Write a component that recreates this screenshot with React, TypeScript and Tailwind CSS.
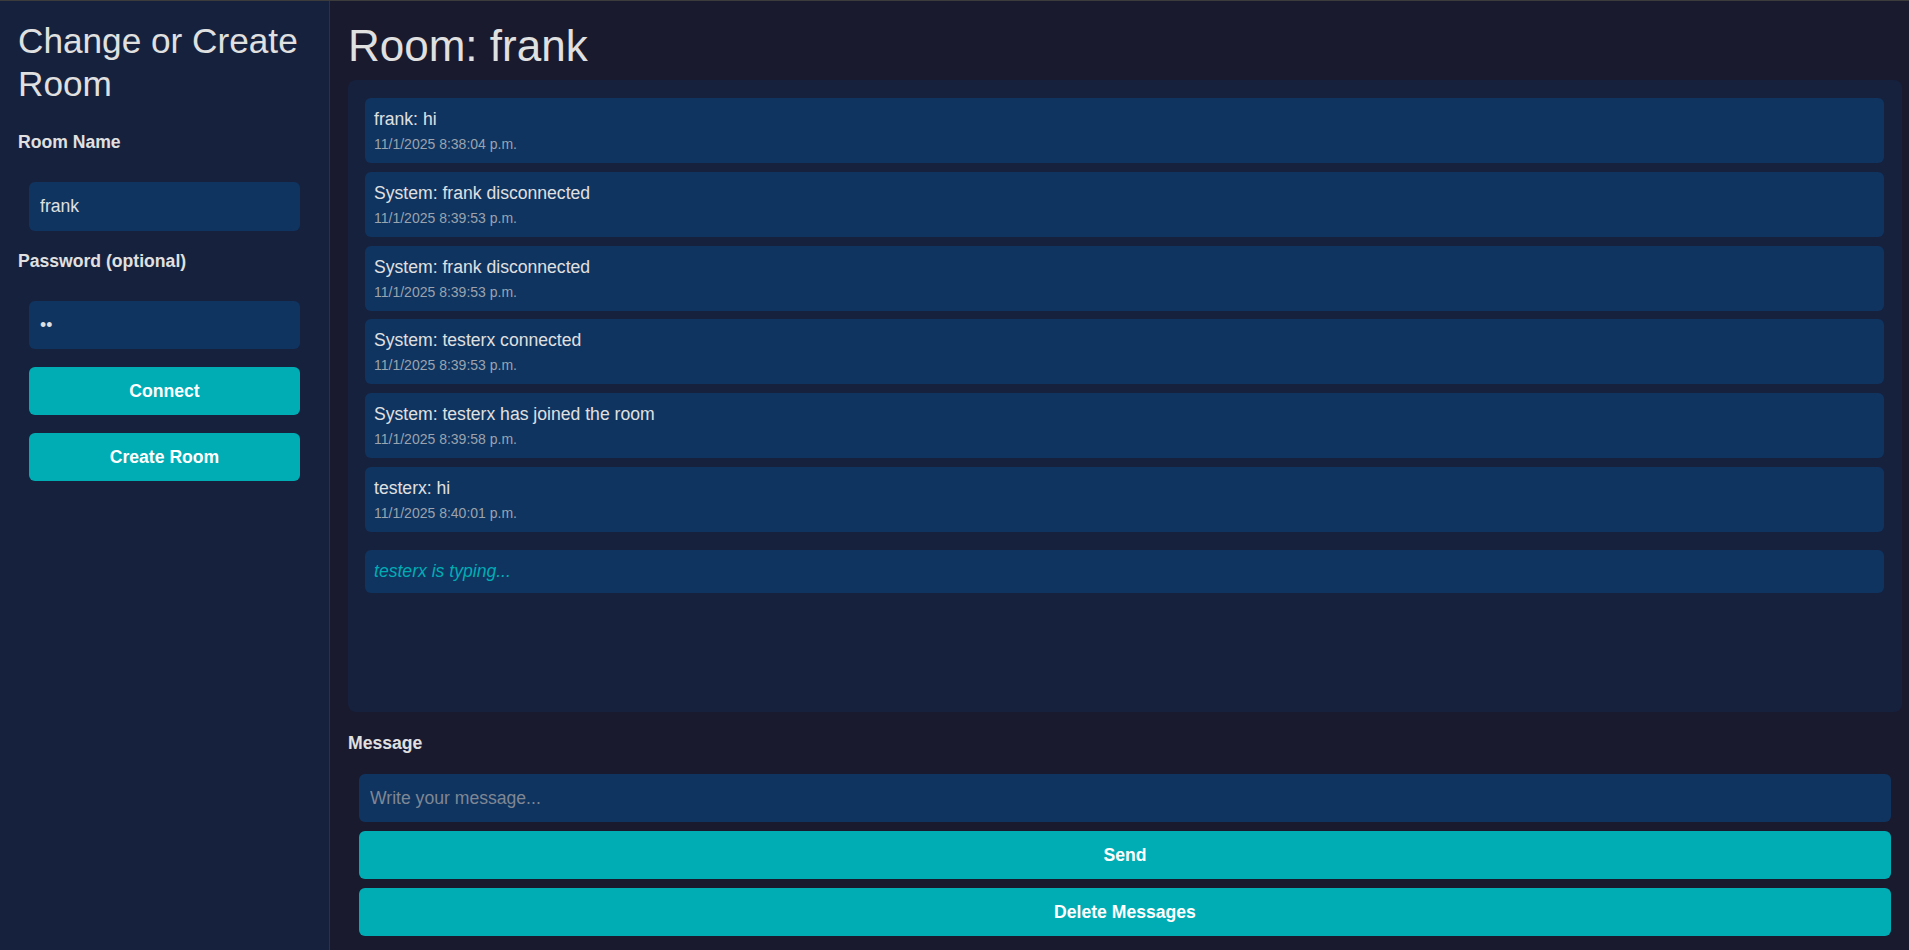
import { useState } from "react";

type Msg = { id: number; text: string; time: string };

const messages: Msg[] = [
  { id: 1, text: "frank: hi", time: "11/1/2025 8:38:04 p.m." },
  { id: 2, text: "System: frank disconnected", time: "11/1/2025 8:39:53 p.m." },
  { id: 3, text: "System: frank disconnected", time: "11/1/2025 8:39:53 p.m." },
  { id: 4, text: "System: testerx connected", time: "11/1/2025 8:39:53 p.m." },
  { id: 5, text: "System: testerx has joined the room", time: "11/1/2025 8:39:58 p.m." },
  { id: 6, text: "testerx: hi", time: "11/1/2025 8:40:01 p.m." },
];

const inputCls =
  "block w-[calc(100%-22px)] mx-[11px] rounded-[6px] bg-[#0f3460] px-[11px] text-[17.6px] text-[#e0e0e0] placeholder:text-[#7f8794] outline-none border-0";
const btnCls =
  "block w-[calc(100%-22px)] mx-[11px] h-[48px] rounded-[6px] bg-[#00adb5] text-[17.6px] font-bold text-white";

const App: React.FC = () => {
  const [room, setRoom] = useState("frank");
  const [draft, setDraft] = useState("");

  return (
    <div className="flex h-[950px] w-full border-t border-[#3c3c3c] bg-[#1a1a2e] font-['Liberation_Sans',Arial,sans-serif] text-[#e0e0e0]">
      {/* Sidebar */}
      <aside className="w-[330px] shrink-0 border-r border-[#1b3461] bg-[#16213e] px-[18px] pt-[18px]">
        <h2 className="text-[35.2px] leading-[43px] font-normal">Change or Create Room</h2>

        <label className="mt-[27px] block text-[17.6px] leading-[20px] font-bold">Room Name</label>
        <input
          className={`${inputCls} mt-[30px] h-[49px]`}
          value={room}
          onChange={(e) => setRoom(e.target.value)}
        />

        <label className="mt-[20px] block text-[17.6px] leading-[20px] font-bold">Password (optional)</label>
        <input className={`${inputCls} mt-[30px] h-[48px]`} type="password" defaultValue="ab" />

        <button className={`${btnCls} mt-[18px]`}>Connect</button>
        <button className={`${btnCls} mt-[18px]`}>Create Room</button>
      </aside>

      {/* Chat */}
      <main className="flex min-w-0 flex-1 flex-col pl-[18px] pr-[7px] pt-[20px]">
        <h1 className="text-[44px] leading-[50px] font-normal">Room: {room}</h1>

        <div className="mt-[9px] flex h-[632px] flex-col gap-[8.8px] rounded-[8px] bg-[#16213e] pl-[17px] pr-[18px] pt-[18px]">
          {messages.map((m) => (
            <div key={m.id} className="rounded-[6px] bg-[#0f3460] px-[9px] pt-[11px] pb-[11px]">
              <div className="text-[17.6px] leading-[20px]">{m.text}</div>
              <div className="mt-[7px] text-[14px] leading-[16px] text-[#9ba3ae]">{m.time}</div>
            </div>
          ))}
          <div className="mt-[9px] rounded-[6px] bg-[#0f3460] px-[9px] pt-[11px] pb-[12px] text-[17.6px] leading-[20px] italic text-[#00adb5]">
            testerx is typing...
          </div>
        </div>

        <label className="mt-[21px] block text-[17.6px] leading-[20px] font-bold">Message</label>
        <input
          className={`${inputCls} mt-[21px] h-[48px]`}
          placeholder="Write your message..."
          value={draft}
          onChange={(e) => setDraft(e.target.value)}
        />
        <button className={`${btnCls} mt-[9px]`}>Send</button>
        <button className={`${btnCls} mt-[9px]`}>Delete Messages</button>
      </main>
    </div>
  );
};

export default App;
